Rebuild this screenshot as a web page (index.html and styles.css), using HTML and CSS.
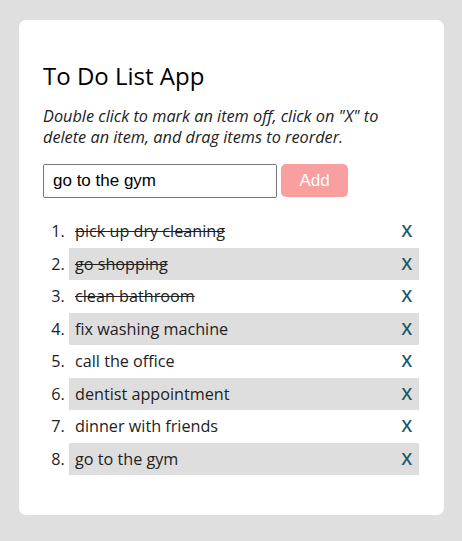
FILE: index.html
```html
<!DOCTYPE html>
<html>
<head>
<meta charset="utf-8">
<link rel="stylesheet" href="styles.css">
</head>
<body>
<div class="card">
  <h1 class="title">To Do List App</h1>
  <p class="hint">Double click to mark an item off, click on "X" to delete an item, and drag items to reorder.</p>
  <form class="add-form">
    <input class="add-input" type="text" value="go to the gym">
    <button class="add-btn" type="button">Add</button>
  </form>
  <ol class="todo">
    <li class="item done"><div class="row"><span class="text">pick up dry cleaning</span><span class="del">X</span></div></li>
    <li class="item done"><div class="row"><span class="text">go shopping</span><span class="del">X</span></div></li>
    <li class="item done"><div class="row"><span class="text">clean bathroom</span><span class="del">X</span></div></li>
    <li class="item"><div class="row"><span class="text">fix washing machine</span><span class="del">X</span></div></li>
    <li class="item"><div class="row"><span class="text">call the office</span><span class="del">X</span></div></li>
    <li class="item"><div class="row"><span class="text">dentist appointment</span><span class="del">X</span></div></li>
    <li class="item"><div class="row"><span class="text">dinner with friends</span><span class="del">X</span></div></li>
    <li class="item"><div class="row"><span class="text">go to the gym</span><span class="del">X</span></div></li>
  </ol>
</div>
</body>
</html>
```
FILE: styles.css
```css
html, body {
  margin: 0;
  padding: 0;
  background: #dfdfdf;
}
body {
  padding: 20px 0 0 19px;
  font-family: "Open Sans", sans-serif;
}
.card {
  width: 425px;
  height: 495px;
  box-sizing: border-box;
  background: #fff;
  border-radius: 7px;
  padding: 39px 24px 0 24px;
}
.title {
  margin: 0;
  font-size: 24px;
  font-weight: 500;
  line-height: 33px;
  color: #000;
}
.hint {
  margin: 14px 0 0 0;
  font-style: italic;
  font-size: 16.3px;
  line-height: 21px;
  color: #222;
}
.add-form {
  display: flex;
  gap: 4px;
  margin-top: 16px;
  align-items: flex-start;
}
.add-input {
  width: 234px;
  height: 34px;
  box-sizing: border-box;
  border: 1px solid #767676;
  border-radius: 2px;
  padding: 0 9px;
  font-family: "Liberation Sans", Arial, sans-serif;
  font-size: 17px;
  color: #000;
  margin: 0;
}
.add-btn {
  width: 67px;
  height: 33px;
  border: none;
  border-radius: 5px;
  background: #fa9f9f;
  color: #fff;
  font-family: "Liberation Sans", Arial, sans-serif;
  font-size: 17px;
  margin: 0;
  padding: 0;
}
.todo {
  margin: 17px 0 0 0;
  padding: 0 1px 0 26px;
  font-size: 16.2px;
  color: #222;
}
.item {
  height: 32.5px;
  padding: 0 7px 0 6px;
  line-height: 32.5px;
}
.item::marker {
  color: #222;
}
.row {
  display: flex;
  justify-content: space-between;
  align-items: baseline;
}
.item:nth-child(even) {
  background: #dedede;
}
.done .text {
  text-decoration: line-through;
}
.del {
  color: #1d5866;
  font-size: 17px;
  font-weight: 600;
}
```
